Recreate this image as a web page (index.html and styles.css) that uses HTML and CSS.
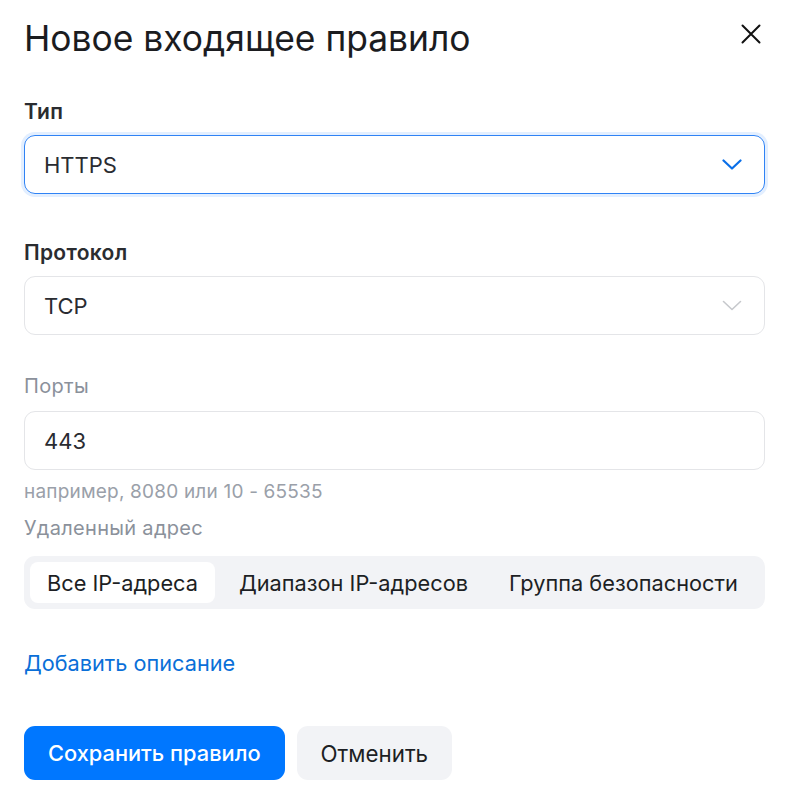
FILE: index.html
```html
<!DOCTYPE html>
<html lang="ru">
<head>
<meta charset="utf-8">
<title>Новое входящее правило</title>
<link rel="stylesheet" href="styles.css">
</head>
<body>
<div class="dialog">
  <div class="header">
    <h1 class="title">Новое входящее правило</h1>
    <button class="close" aria-label="Закрыть">
      <svg width="20" height="20" viewBox="0 0 20 20"><path d="M1.5 1.5L18.5 18.5M18.5 1.5L1.5 18.5" stroke="#111" stroke-width="2" stroke-linecap="round"/></svg>
    </button>
  </div>

  <div class="field field-type">
    <div class="label-strong">Тип</div>
    <div class="select select-focus">
      <span class="value">HTTPS</span>
      <svg class="chev" width="20" height="11" viewBox="0 0 20 11"><path d="M1.5 1.5L10 9.5L18.5 1.5" fill="none" stroke="#0a6fe8" stroke-width="2.2" stroke-linecap="round" stroke-linejoin="round"/></svg>
    </div>
  </div>

  <div class="field field-proto">
    <div class="label-strong">Протокол</div>
    <div class="select">
      <span class="value">TCP</span>
      <svg class="chev" width="20" height="11" viewBox="0 0 20 11"><path d="M1.5 1.5L10 9.5L18.5 1.5" fill="none" stroke="#c6c8cc" stroke-width="1.6" stroke-linecap="round" stroke-linejoin="round"/></svg>
    </div>
  </div>

  <div class="field field-ports">
    <div class="label-muted label-ports">Порты</div>
    <div class="input"><span class="value">443</span></div>
    <div class="hint">например, 8080 или 10 - 65535</div>
  </div>

  <div class="field field-remote">
    <div class="label-muted label-remote">Удаленный адрес</div>
    <div class="segmented">
      <div class="seg active">Все IP-адреса</div>
      <div class="seg">Диапазон IP-адресов</div>
      <div class="seg">Группа безопасности</div>
    </div>
  </div>

  <a class="link" href="#">Добавить описание</a>

  <div class="actions">
    <button class="btn btn-primary">Сохранить правило</button>
    <button class="btn btn-secondary">Отменить</button>
  </div>
</div>
</body>
</html>
```
FILE: styles.css
```css
* { box-sizing: border-box; }
html, body { margin: 0; padding: 0; background: #fff; }
body {
  font-family: Inter, "Noto Sans", "Liberation Sans", sans-serif;
  color: #1d1f24;
}
.dialog {
  width: 791px;
  padding: 16px 26px 0 24px;
}
.header {
  display: flex;
  justify-content: space-between;
  align-items: flex-start;
}
.title {
  margin: 0;
  font-size: 35.4px;
  font-weight: 400;
  line-height: 46px;
  color: #1b1c1f;
}
.close {
  border: 0;
  background: none;
  padding: 0;
  margin: 6px 2px 0 0;
  width: 24px;
  height: 24px;
  display: flex;
  align-items: center;
  justify-content: center;
}
.field { display: flex; flex-direction: column; }
.field-type { margin-top: 37px; }
.field-proto { margin-top: 46px; }
.field-ports { margin-top: 38px; }
.field-remote { margin-top: 11px; }
.label-strong {
  font-size: 21px;
  font-weight: 600;
  line-height: 26px;
  letter-spacing: 0.3px;
  margin-bottom: 10px;
  color: #2a2c30;
}
.label-muted {
  font-size: 20px;
  line-height: 26px;
  letter-spacing: 0.3px;
  color: #8b919b;
}
.label-ports { margin-bottom: 12px; }
.label-remote { margin-bottom: 15px; }
.select, .input {
  height: 59px;
  border: 1px solid #e4e5e8;
  border-radius: 11px;
  display: flex;
  align-items: center;
  justify-content: space-between;
  padding: 0 22px 0 19px;
}
.select-focus {
  border-color: #2f83f5;
  box-shadow: 0 0 0 3px #e3efff;
}
.value {
  font-size: 22px;
  color: #2a2c31;
}
.chev { display: block; }
.hint {
  margin-top: 10px;
  font-size: 19px;
  line-height: 24px;
  letter-spacing: 0.2px;
  color: #9aa0a9;
}
.segmented {
  display: flex;
  gap: 7px;
  background: #f2f3f6;
  border-radius: 11px;
  padding: 6px;
  height: 53px;
}
.seg {
  display: flex;
  align-items: center;
  flex-shrink: 0;
  white-space: nowrap;
  padding: 0 17px;
  font-size: 21.75px;
  color: #1d1f24;
  border-radius: 8px;
}
.seg.active {
  background: #fff;
}
.link {
  display: inline-block;
  align-self: flex-start;
  margin-top: 41px;
  font-size: 21.7px;
  line-height: 26px;
  color: #0a6fd8;
  text-decoration: none;
}
.actions {
  display: flex;
  gap: 12px;
  margin-top: 50px;
}
.btn {
  height: 54px;
  border: 0;
  border-radius: 11px;
  font-family: inherit;
  font-size: 21.8px;
  padding: 0 24px;
  font-weight: 500;
  white-space: nowrap;
}
.btn-primary {
  background: #0077ff;
  color: #fff;
}
.btn-secondary {
  background: #f2f3f6;
  color: #1d1f24;
  font-weight: 400;
  font-size: 22.3px;
}
```
